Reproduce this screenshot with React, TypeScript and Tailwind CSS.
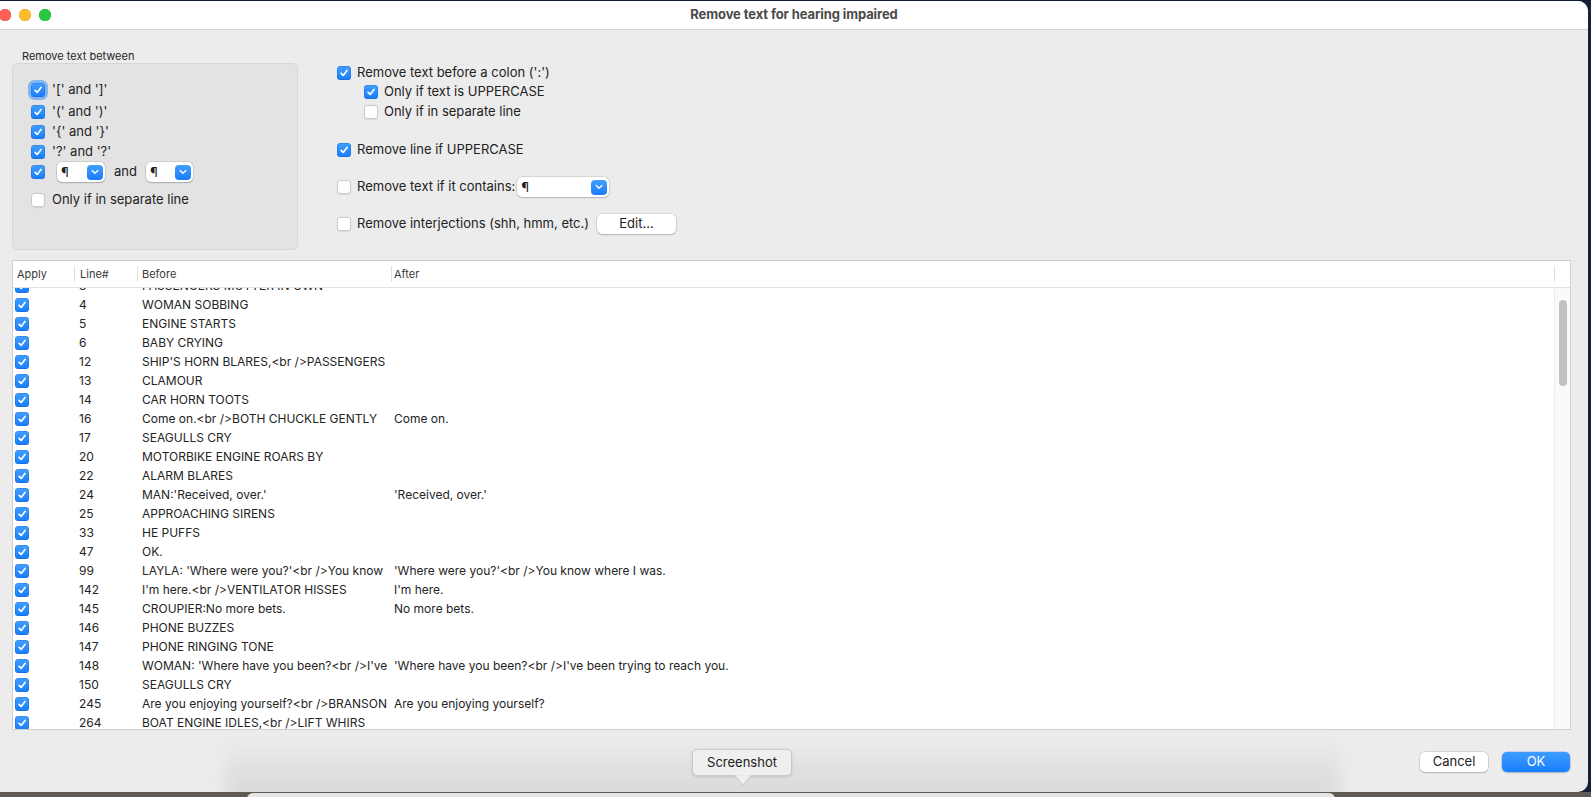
import React from "react";

const Check = ({ checked, focus }: { checked?: boolean; focus?: boolean }) => (
  <span
    className={`w-[14px] h-[14px] rounded-[3.5px] flex items-center justify-center shrink-0 ${
      checked
        ? "bg-linear-to-b from-[#419fff] to-[#187cf9] shadow-[inset_0_0_0_0.5px_rgba(0,60,160,0.35)]"
        : "bg-white shadow-[inset_0_0_0_1px_#c9c9c9,0_0.5px_1px_rgba(0,0,0,0.08)]"
    } ${focus ? "ring-[3px] ring-[#83b4f1]" : ""}`}
  >
    {checked && (
      <svg width="10" height="10" viewBox="0 0 10 10">
        <path d="M2.1 5.3 L4.2 7.4 L8 2.5" stroke="white" strokeWidth="1.7" fill="none" strokeLinecap="round" strokeLinejoin="round" />
      </svg>
    )}
  </span>
);

const Chevron = () => (
  <svg width="8" height="6" viewBox="0 0 8 6">
    <path d="M1.2 1.6 L4 4.3 L6.8 1.6" stroke="white" strokeWidth="1.4" fill="none" strokeLinecap="round" strokeLinejoin="round" />
  </svg>
);

const Popup = ({ w }: { w: string }) => (
  <div className={`${w} h-[20px] bg-white rounded-[5px] shadow-[0_0_0_0.5px_rgba(0,0,0,0.18),0_1px_1.5px_rgba(0,0,0,0.16)] flex items-center justify-between pl-[4px] pr-[2px]`}>
    <span className="text-[13px] leading-none text-[#1f1f1f]">¶</span>
    <span className="w-[16px] h-[15px] rounded-[4px] bg-linear-to-b from-[#419fff] to-[#187cf9] flex items-center justify-center">
      <Chevron />
    </span>
  </div>
);

const rows: [string, string, string][] = [
  ["3", "PASSENGERS MUTTER IN OWN", ""],
  ["4", "WOMAN SOBBING", ""],
  ["5", "ENGINE STARTS", ""],
  ["6", "BABY CRYING", ""],
  ["12", "SHIP'S HORN BLARES,<br />PASSENGERS", ""],
  ["13", "CLAMOUR", ""],
  ["14", "CAR HORN TOOTS", ""],
  ["16", "Come on.<br />BOTH CHUCKLE GENTLY", "Come on."],
  ["17", "SEAGULLS CRY", ""],
  ["20", "MOTORBIKE ENGINE ROARS BY", ""],
  ["22", "ALARM BLARES", ""],
  ["24", "MAN:'Received, over.'", "'Received, over.'"],
  ["25", "APPROACHING SIRENS", ""],
  ["33", "HE PUFFS", ""],
  ["47", "OK.", ""],
  ["99", "LAYLA: 'Where were you?'<br />You know", "'Where were you?'<br />You know where I was."],
  ["142", "I'm here.<br />VENTILATOR HISSES", "I'm here."],
  ["145", "CROUPIER:No more bets.", "No more bets."],
  ["146", "PHONE BUZZES", ""],
  ["147", "PHONE RINGING TONE", ""],
  ["148", "WOMAN: 'Where have you been?<br />I've", "'Where have you been?<br />I've been trying to reach you."],
  ["150", "SEAGULLS CRY", ""],
  ["245", "Are you enjoying yourself?<br />BRANSON", "Are you enjoying yourself?"],
  ["264", "BOAT ENGINE IDLES,<br />LIFT WHIRS", ""],
];

export default function App() {
  return (
    <div className="w-[1591px] h-[797px] overflow-hidden bg-[#172036] font-['Inter','Noto_Sans',sans-serif] text-[#222] flex flex-col">
      <div className="h-[1px] bg-[#0f1b33] shrink-0" />
      <div className="w-[1588px] h-[791px] shrink-0 bg-[#ececec] rounded-tr-[10px] rounded-br-[10px] overflow-hidden relative flex flex-col">
        {/* title bar */}
        <div className="h-[29px] shrink-0 bg-white border-b border-[#d2d2d2] flex items-center relative">
          <div className="flex items-center gap-[8px] -ml-[1px]">
            <span className="w-[12px] h-[12px] rounded-full bg-[#fe5f57] shadow-[inset_0_0_0_0.5px_#e0443e]" />
            <span className="w-[12px] h-[12px] rounded-full bg-[#febc2e] shadow-[inset_0_0_0_0.5px_#dea123]" />
            <span className="w-[12px] h-[12px] rounded-full bg-[#28c840] shadow-[inset_0_0_0_0.5px_#1aab29]" />
          </div>
          <div className="absolute inset-0 flex items-center justify-center pointer-events-none">
            <span className="text-[13px] font-bold text-[#4a4a4a] tracking-[-0.1px]">Remove text for hearing impaired</span>
          </div>
        </div>

        {/* top section */}
        <div className="h-[230px] shrink-0 flex">
          <div className="ml-[12px] w-[286px] pt-[20px] flex flex-col">
            <div className="h-[13px] leading-[13px] text-[11px] pl-[10px] text-[#262626]">Remove text between</div>
            <div className="h-[187px] bg-[#e3e3e3] border border-[#d7d7d7] rounded-[5px] pt-[16px] pl-[18px] flex flex-col text-[13px]">
              <div className="h-[20px] flex items-center gap-[7px]">
                <Check checked focus />
                <span>'[' and ']'</span>
              </div>
              <div className="h-[20px] mt-[2px] flex items-center gap-[7px]">
                <Check checked />
                <span>'(' and ')'</span>
              </div>
              <div className="h-[20px] flex items-center gap-[7px]">
                <Check checked />
                <span>'{"{"}' and '{"}"}'</span>
              </div>
              <div className="h-[20px] flex items-center gap-[7px]">
                <Check checked />
                <span>'?' and '?'</span>
              </div>
              <div className="h-[20px] flex items-center">
                <Check checked />
                <div className="ml-[12px]">
                  <Popup w="w-[48px]" />
                </div>
                <span className="ml-[9px] w-[32px]">and</span>
                <Popup w="w-[47px]" />
              </div>
              <div className="h-[20px] mt-[8px] flex items-center gap-[7px]">
                <Check />
                <span>Only if in separate line</span>
              </div>
            </div>
          </div>

          <div className="ml-[39px] pt-[33px] flex flex-col text-[13px]">
            <div className="h-[20px] flex items-center gap-[6px]">
              <Check checked />
              <span>Remove text before a colon (':')</span>
            </div>
            <div className="h-[20px] -mt-[1px] pl-[27px] flex items-center gap-[6px]">
              <Check checked />
              <span>Only if text is UPPERCASE</span>
            </div>
            <div className="h-[20px] pl-[27px] flex items-center gap-[6px]">
              <Check />
              <span>Only if in separate line</span>
            </div>
            <div className="h-[20px] mt-[18px] flex items-center gap-[6px]">
              <Check checked />
              <span>Remove line if UPPERCASE</span>
            </div>
            <div className="h-[20px] mt-[17px] flex items-center gap-[6px]">
              <Check />
              <span>Remove text if it contains:</span>
              <div className="-ml-[4px]">
                <Popup w="w-[92px]" />
              </div>
            </div>
            <div className="h-[20px] mt-[17px] flex items-center gap-[6px]">
              <Check />
              <span>Remove interjections (shh, hmm, etc.)</span>
              <button className="ml-[2px] w-[79px] h-[20px] bg-white rounded-[5px] shadow-[0_0_0_0.5px_rgba(0,0,0,0.18),0_1px_1.5px_rgba(0,0,0,0.16)] text-[13px] text-[#222] flex items-center justify-center">
                Edit...
              </button>
            </div>
          </div>
        </div>

        {/* table */}
        <div className="ml-[12px] mr-[17px] h-[470px] shrink-0 bg-white border border-[#cfcfcf] flex flex-col">
          <div className="h-[27px] shrink-0 border-b border-[#e2e2e2] flex text-[11px] text-[#3a3a3a]">
            <div className="w-[61px] flex items-center pl-[4px]">Apply</div>
            <div className="w-[63px] flex items-center">
              <span className="w-[1px] h-[16px] bg-[#e0e0e0]" />
              <span className="pl-[5px]">Line#</span>
            </div>
            <div className="w-[254px] flex items-center">
              <span className="w-[1px] h-[16px] bg-[#e0e0e0]" />
              <span className="pl-[4px]">Before</span>
            </div>
            <div className="w-[1163px] flex items-center">
              <span className="w-[1px] h-[16px] bg-[#e0e0e0]" />
              <span className="pl-[2px]">After</span>
            </div>
            <div className="w-[16px] flex items-center">
              <span className="w-[1px] h-[16px] bg-[#e0e0e0]" />
            </div>
          </div>
          <div className="flex-1 flex min-h-0">
            <div className="flex-1 overflow-hidden">
              <div className="-mt-[12px] flex flex-col text-[12px] text-[#242424]">
                {rows.map(([n, b, a], i) => (
                  <div key={i} className="h-[19px] shrink-0 flex items-center">
                    <div className="w-[61px] pl-[2px] flex items-center">
                      <Check checked />
                    </div>
                    <div className="w-[63px] pl-[5px] whitespace-nowrap">{n}</div>
                    <div className="w-[254px] pl-[5px] pr-[4px] whitespace-nowrap overflow-hidden">{b}</div>
                    <div className="flex-1 pl-[3px] whitespace-nowrap overflow-hidden">{a}</div>
                  </div>
                ))}
              </div>
            </div>
            <div className="w-[16px] shrink-0 bg-[#fafafa] border-l border-[#ececec] pt-[12px] flex justify-center">
              <div className="w-[8px] h-[86px] rounded-full bg-[#c2c2c2]" />
            </div>
          </div>
        </div>

        {/* bottom buttons */}
        <div className="flex-1 flex justify-end items-start pt-[22px] pr-[18px] gap-[14px]">
          <button className="w-[68px] h-[20px] bg-white rounded-[5px] shadow-[0_0_0_0.5px_rgba(0,0,0,0.18),0_1px_1.5px_rgba(0,0,0,0.16)] text-[13px] text-[#222] flex items-center justify-center">
            Cancel
          </button>
          <button className="w-[68px] h-[20px] bg-linear-to-b from-[#3e9cff] to-[#1580fb] rounded-[5px] shadow-[0_0_0_0.5px_rgba(0,80,200,0.3),0_1px_1.5px_rgba(0,0,0,0.16)] text-[13px] text-white flex items-center justify-center">
            OK
          </button>
        </div>

        {/* shading from window behind */}
        <div className="absolute left-[225px] top-[738px] w-[1115px] h-[60px] rounded-[14px] bg-linear-to-b from-transparent to-black/[0.09] blur-[8px] pointer-events-none" />

        {/* tooltip */}
        <div className="absolute left-[692px] top-[748px] pointer-events-none">
          <div className="relative w-[100px] h-[27px] bg-[#efefef] border border-[#c9c9c9] rounded-[5px] shadow-[0_1px_3px_rgba(0,0,0,0.12)] flex items-center justify-center text-[13px] text-[#222]">
            Screenshot
            <svg className="absolute left-[42px] top-[25px]" width="16" height="11" viewBox="0 0 16 11">
              <path d="M0 0.5 L8 10 L16 0.5" fill="#efefef" stroke="#c9c9c9" strokeWidth="1" />
              <rect x="0" y="-1" width="16" height="1.6" fill="#efefef" />
            </svg>
          </div>
        </div>
      </div>
      <div className="h-[5px] shrink-0 bg-[#5f5a53] flex">
        <div className="ml-[247px] mt-[1px] w-[1088px] h-[6px] bg-[#e5e5e5] rounded-t-[7px]" />
      </div>
    </div>
  );
}
